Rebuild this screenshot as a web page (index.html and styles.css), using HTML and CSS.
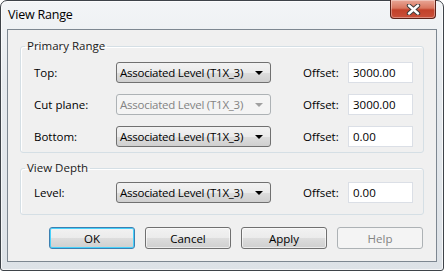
FILE: index.html
```html
<!DOCTYPE html>
<html lang="en">
<head>
    <meta charset="UTF-8">
    <title>View Range</title>
    <link rel="stylesheet" href="styles.css">
</head>
<body>
    <div class="window">
        <div class="titlebar">
            <span class="title">View Range</span>
            <button class="close" aria-label="Close">
                <svg width="17" height="11" viewBox="0 0 17 11">
                    <path d="M4 1.5 L13 9.5 M13 1.5 L4 9.5" stroke="#3b3b3b" stroke-width="4.4" stroke-linecap="round"/>
                    <path d="M4 1.5 L13 9.5 M13 1.5 L4 9.5" stroke="#ffffff" stroke-width="2.4" stroke-linecap="round"/>
                </svg>
            </button>
        </div>

        <div class="client">
            <fieldset class="group primary">
                <legend>Primary Range</legend>
                <div class="row">
                    <label>Top:</label>
                    <div class="combo"><span class="value">Associated Level (T1X_3)</span><span class="arrow"></span></div>
                    <label class="offset">Offset:</label>
                    <div class="field">3000.00</div>
                </div>
                <div class="row">
                    <label>Cut plane:</label>
                    <div class="combo disabled"><span class="value">Associated Level (T1X_3)</span><span class="arrow"></span></div>
                    <label class="offset">Offset:</label>
                    <div class="field">3000.00</div>
                </div>
                <div class="row">
                    <label>Bottom:</label>
                    <div class="combo"><span class="value">Associated Level (T1X_3)</span><span class="arrow"></span></div>
                    <label class="offset">Offset:</label>
                    <div class="field">0.00</div>
                </div>
            </fieldset>

            <fieldset class="group depth">
                <legend>View Depth</legend>
                <div class="row">
                    <label>Level:</label>
                    <div class="combo"><span class="value">Associated Level (T1X_3)</span><span class="arrow"></span></div>
                    <label class="offset">Offset:</label>
                    <div class="field">0.00</div>
                </div>
            </fieldset>

            <div class="buttons">
                <button class="btn default">OK</button>
                <button class="btn">Cancel</button>
                <button class="btn">Apply</button>
                <button class="btn disabled">Help</button>
            </div>
        </div>
    </div>
</body>
</html>
```

FILE: styles.css
```css
html, body { margin: 0; padding: 0; }
body { font-family: "Open Sans", "Noto Sans", sans-serif; font-size: 11.5px; color: #000; background: #fff; }

.window {
    width: 444px; height: 271px; box-sizing: border-box;
    border: 1px solid #3e4349; border-radius: 7px 7px 3px 3px;
    background: linear-gradient(180deg, #f3f5f7 0%, #e6eaee 30%, #dde2e7 100%);
    box-shadow: inset 0 0 0 1px rgba(255,255,255,0.7);
    padding: 0 6px;
    display: flex; flex-direction: column;
}

.titlebar { height: 28px; display: flex; align-items: flex-start; justify-content: space-between; }
.title { font-size: 12.5px; margin-top: 5px; margin-left: 1px; color: #000; letter-spacing: -0.2px; }
.close {
    width: 46px; height: 19px; margin-top: -1px; margin-right: 1px; padding: 0;
    border: 1px solid #5b2219; border-top: none; border-radius: 0 0 4px 4px;
    background: linear-gradient(180deg, #e9a797 0%, #d9765f 45%, #c2412a 55%, #c9503a 100%);
    box-shadow: inset 0 0 0 1px rgba(255,255,255,0.35);
    display: flex; align-items: center; justify-content: center;
}

.client {
    height: 233px; box-sizing: border-box;
    border: 1px solid #7d8791; background: #f0f0f0;
    padding: 8px 12px 0 12px;
}

.group {
    margin: 0; border: 1px solid #d5dfe5; border-radius: 3px;
    box-shadow: inset 1px 1px 0 #fff;
    padding: 8px 0 5px 13px;
}
.group legend { padding: 0 2px; margin-left: -9px; line-height: 16px; color: #1a1a1a; }
.group.depth { margin-top: 7px; padding-top: 6px; padding-bottom: 11px; }

.row { display: flex; align-items: center; height: 21px; white-space: nowrap; }
.row + .row { margin-top: 11px; }
.row label { width: 82px; }
.row label.offset { width: 45px; margin-left: 32px; }

.combo {
    width: 155px; height: 21px; box-sizing: border-box;
    border: 1px solid #707070; border-radius: 3px;
    background: linear-gradient(180deg, #f2f2f2 0%, #ebebeb 50%, #dddddd 51%, #cfcfcf 100%);
    padding-left: 3px; line-height: 19px;
    display: flex; align-items: center; justify-content: space-between;
}
.combo .value { letter-spacing: -0.25px; }
.combo .arrow {
    width: 0; height: 0; margin-right: 7px;
    border-left: 4px solid transparent; border-right: 4px solid transparent;
    border-top: 4px solid #000;
}
.combo.disabled { border-color: #adb2b5; background: #f4f4f4; color: #838383; }
.combo.disabled .arrow { border-top-color: #a0a0a0; }

.field {
    width: 65px; height: 21px; box-sizing: border-box;
    border: 1px solid #dbdfe6; background: #fff;
    padding-left: 4px; line-height: 19px;
}

.buttons { display: flex; justify-content: flex-end; gap: 10px; margin-top: 12px; padding-right: 1px; }
.btn {
    width: 86px; height: 22px; padding: 0;
    font: inherit; color: #000;
    border: 1px solid #707070; border-radius: 3px;
    background: linear-gradient(180deg, #f2f2f2 0%, #ebebeb 50%, #dddddd 51%, #cfcfcf 100%);
    box-shadow: inset 0 0 0 1px rgba(255,255,255,0.6);
}
.btn.default { border-color: #3c7fb1; box-shadow: inset 0 0 0 1px #48d1fb; }
.btn.disabled { border-color: #adb2b5; background: #f4f4f4; color: #838383; box-shadow: none; }
```
